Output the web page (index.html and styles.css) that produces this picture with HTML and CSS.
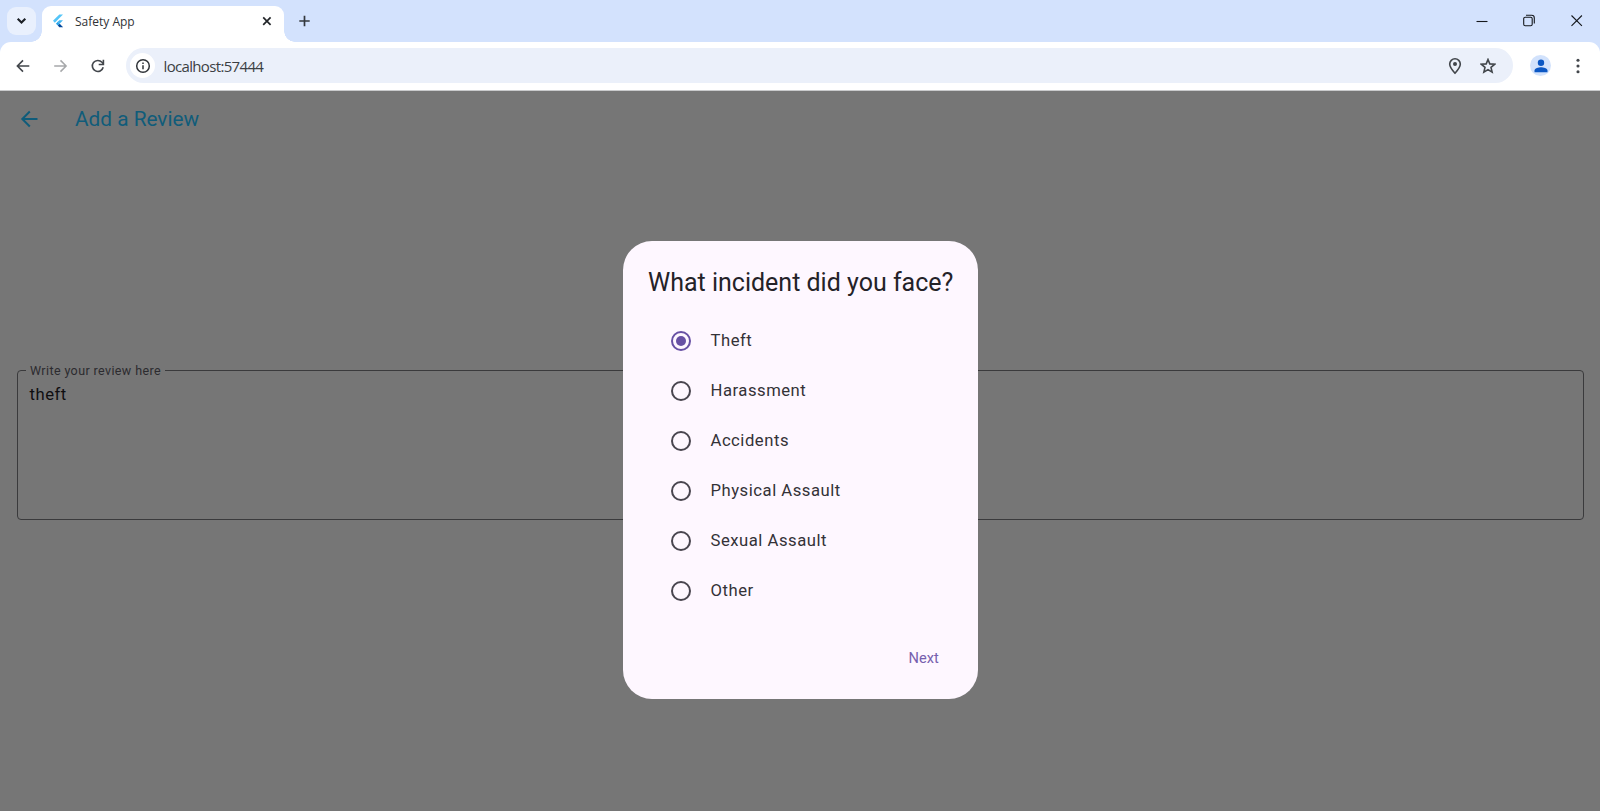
FILE: index.html
```html
<!DOCTYPE html>
<html lang="en">
<head>
<meta charset="utf-8">
<title>Safety App</title>
<link rel="stylesheet" href="styles.css">
</head>
<body>
<div class="browser">
  <header class="tabstrip">
    <button class="tab-search" aria-label="Search tabs"><svg width="29" height="28" viewBox="0 0 29 28"><path d="M10.700 11.700l3.800 3.800 3.800-3.800" fill="none" stroke="#1c2026" stroke-width="2.100"/></svg></button>
    <div class="tab">
      <svg class="favicon" width="16" height="16" viewBox="0 0 16 16"><path d="M9.300 1.500H13L4.800 9.700 3 7.800z" fill="#54c5f8"/><path d="M9.300 7.200H13L9.600 10.700 7.700 8.800z" fill="#43b6f0"/><path d="M5.900 10.700l1.900-1.900 1.900 1.900-1.900 1.900z" fill="#29a3e8"/><path d="M7.800 12.600l1.900-1.900 3.400 3.500H9.300z" fill="#01479c"/></svg>
      <span class="tab-title">Safety App</span>
      <svg class="tab-close" width="12" height="12" viewBox="0 0 12 12"><path d="M2.200 2.400l7.400 7.400M9.600 2.400L2.200 9.800" stroke="#222529" stroke-width="1.700"/></svg>
    </div>
    <svg class="new-tab" width="14" height="14" viewBox="0 0 14 14"><path d="M7.500 1.800v10.400M2.300 7h10.400" stroke="#34383d" stroke-width="1.700"/></svg>
    <div class="window-controls">
      <svg width="14" height="14" viewBox="0 0 14 14"><path d="M1.500 7.500h11" stroke="#15181d" stroke-width="1.100"/></svg>
      <svg width="14" height="14" viewBox="0 0 14 14"><rect x="1.700" y="3.300" width="8.500" height="8.500" rx="1.500" fill="none" stroke="#15181d" stroke-width="1.100"/><path d="M4 1.300h5.700a2.600 2.600 0 0 1 2.600 2.600V9.500" fill="none" stroke="#15181d" stroke-width="1.100"/></svg>
      <svg width="14" height="14" viewBox="0 0 14 14"><path d="M1.500 1.500l10.400 10.400M11.900 1.500L1.500 11.900" stroke="#15181d" stroke-width="1.100"/></svg>
    </div>
  </header>
  <div class="toolbar">
    <div class="nav">
      <svg width="16" height="16" viewBox="0 0 16 16"><path d="M14.300 8H2.800M8 2.400L2.400 8 8 13.600" fill="none" stroke="#42464b" stroke-width="1.600"/></svg>
      <svg width="16" height="16" viewBox="0 0 16 16"><path d="M1.200 8h11.500M7.500 2.400L13.100 8l-5.600 5.600" fill="none" stroke="#a6a8aa" stroke-width="1.500"/></svg>
      <svg width="16" height="16" viewBox="0 0 16 16"><path d="M13.200 9.300a5.500 5.500 0 1 1-1.200-5l1.500 1.700" fill="none" stroke="#42464b" stroke-width="1.600"/><path d="M13.400 1.800v4.700H8.700" fill="none" stroke="#42464b" stroke-width="1.600"/></svg>
    </div>
    <div class="omnibox">
      <span class="site-info"><svg width="16" height="16" viewBox="0 0 16 16"><circle cx="8" cy="8" r="6.300" fill="none" stroke="#303439" stroke-width="1.500"/><path d="M8 7.200v4M8 4.600v1.500" stroke="#303439" stroke-width="1.500"/></svg></span>
      <span class="url">localhost:57444</span>
      <svg class="pin" width="14" height="18" viewBox="0 0 14 18"><path d="M7 16.200C3.200 12.200 1.700 9.700 1.700 7.100a5.300 5.300 0 0 1 10.600 0c0 2.600-1.500 5.100-5.300 9.100z" fill="none" stroke="#42464b" stroke-width="1.600"/><circle cx="7" cy="7.100" r="2" fill="#42464b"/></svg>
      <svg class="star" width="16" height="16" viewBox="0 0 16 16"><path d="M8 1.500l1.800 4.400 4.800.4-3.600 3.100 1.100 4.700L8 11.600l-4.100 2.500L5 9.400 1.400 6.300l4.800-.4z" fill="none" stroke="#42464b" stroke-width="1.600"/></svg>
    </div>
    <span class="profile"><svg width="14" height="14" viewBox="0 0 14 14"><circle cx="7" cy="3.800" r="3.200" fill="#0b57c4"/><path d="M.5 13.300V11.600C.5 9.300 4.700 8.300 7 8.300s6.500 1 6.500 3.300v1.700z" fill="#0b57c4"/></svg></span>
    <svg class="menu" width="4" height="16" viewBox="0 0 4 16"><circle cx="2" cy="2.200" r="1.550" fill="#42464b"/><circle cx="2" cy="8" r="1.550" fill="#42464b"/><circle cx="2" cy="13.800" r="1.550" fill="#42464b"/></svg>
  </div>
  <main class="page">
    <div class="appbar">
      <svg width="18" height="18" viewBox="0 0 18 18"><path d="M17.500 9H3M9.800 1.500L2.300 9l7.500 7.500" fill="none" stroke="#105c7a" stroke-width="2"/></svg>
      <h1>Add a Review</h1>
    </div>
    <fieldset class="review">
      <legend>Write your review here</legend>
      <p>theft</p>
    </fieldset>
    <section class="dialog" role="dialog">
      <h2>What incident did you face?</h2>
      <ul class="options">
        <li><i class="radio checked"></i><span>Theft</span></li>
        <li><i class="radio"></i><span>Harassment</span></li>
        <li><i class="radio"></i><span>Accidents</span></li>
        <li><i class="radio"></i><span>Physical Assault</span></li>
        <li><i class="radio"></i><span>Sexual Assault</span></li>
        <li><i class="radio"></i><span>Other</span></li>
      </ul>
      <button class="next">Next</button>
    </section>
  </main>
</div>
</body>
</html>
```
FILE: styles.css
```css
* { box-sizing: border-box; margin: 0; padding: 0; }
body { font-family: Roboto, sans-serif; overflow: hidden; }
button { border: 0; background: none; font: inherit; }
svg { display: block; flex: none; }
.browser { display: flex; flex-direction: column; height: 811px; background: #d3e2fd; }

.tabstrip { display: flex; height: 41.500px; padding: 0 16px 0 7px; }
.tab-search { width: 29px; height: 28px; margin-top: 7px; border-radius: 9px; background: #e9f0fd; }
.tab { position: relative; display: flex; align-items: center; width: 242px; height: 35.500px; margin: 6px 0 0 6px; padding: 0 11px 5.500px 8px; border-radius: 9px 9px 0 0; background: #fff; }
.tab::before, .tab::after { content: ""; position: absolute; bottom: 0; width: 11px; height: 11px; }
.tab::before { left: -11px; background: radial-gradient(circle at 0 0, transparent 10.5px, #fff 11px); }
.tab::after { right: -11px; background: radial-gradient(circle at 100% 0, transparent 10.5px, #fff 11px); }
.tab-title { margin-left: 9px; padding-top: 1px; font: 12px/16px "Open Sans", sans-serif; color: #303236; }
.tab-close { margin-left: auto; }
.new-tab { margin: 14px 0 0 13px; }
.window-controls { display: flex; gap: 33px; margin: 13.500px 0 0 auto; }
.window-controls svg:last-child { margin-left: 1px; }

.toolbar { display: flex; align-items: center; height: 49.500px; padding: 0 20px 0 15px; border-bottom: 1px solid #c9cacc; border-radius: 11px 11px 0 0; background: #fff; }
.nav { display: flex; gap: 21.500px; }
.omnibox { display: flex; align-items: center; width: 1387px; height: 35px; margin-left: 20px; padding: 0 17px 0 4px; border-radius: 18px; background: #ebf0fa; }
.site-info { display: grid; place-items: center; width: 25px; height: 25px; border-radius: 50%; background: #fff; }
.url { margin-left: 8.500px; padding-top: 1px; font: 15px/20px "Open Sans", sans-serif; color: #3c3f43; letter-spacing: -.660px; }
.pin { margin-left: auto; }
.star { margin-left: 18px; }
.profile { display: grid; place-items: center; width: 21px; height: 21px; margin-left: 17px; border-radius: 50%; background: #d2e2fc; }
.menu { margin-left: 25px; }

.page { position: relative; flex: 1; background: #767676; }
.appbar { display: flex; align-items: center; height: 56px; padding-left: 20px; }
.appbar h1 { margin-left: 37px; font-size: 20.800px; font-weight: 400; color: #105c7a; }
.review { width: 1567px; height: 156.500px; margin: 216px 0 0 17px; padding: 0 11px; border: 1px solid #3a3a3c; border-radius: 4px; }
.review legend { margin-left: -3px; padding: 0 4px; font-size: 12.500px; line-height: 15px; letter-spacing: .390px; color: #2c2b2f; }
.review p { margin: 7px 0 0 .5px; font-size: 16.670px; line-height: 20px; letter-spacing: .52px; color: #0f0e10; }

.dialog { position: absolute; left: 623px; top: 150px; display: flex; flex-direction: column; width: 355px; height: 458px; padding: 25px; border-radius: 29px; background: #fef7ff; }
.dialog h2 { font-size: 25px; line-height: 33px; font-weight: 400; color: #242228; white-space: nowrap; }
.options { margin-top: 17px; list-style: none; }
.options li { display: flex; align-items: center; height: 50px; padding-left: 23px; font-size: 16.670px; letter-spacing: .52px; color: #343237; }
.options span { margin-left: 19.500px; padding-bottom: 2px; }
.radio { position: relative; width: 20px; height: 20px; border: 2px solid #49454f; border-radius: 50%; }
.radio.checked { border-color: #6750a4; }
.radio.checked::after { content: ""; position: absolute; inset: 3px; border-radius: 50%; background: #6750a4; }
.next { align-self: flex-end; margin: 32px 14px 0 0; font-size: 14.600px; line-height: 21px; letter-spacing: .1px; color: #7660ae; }
```
